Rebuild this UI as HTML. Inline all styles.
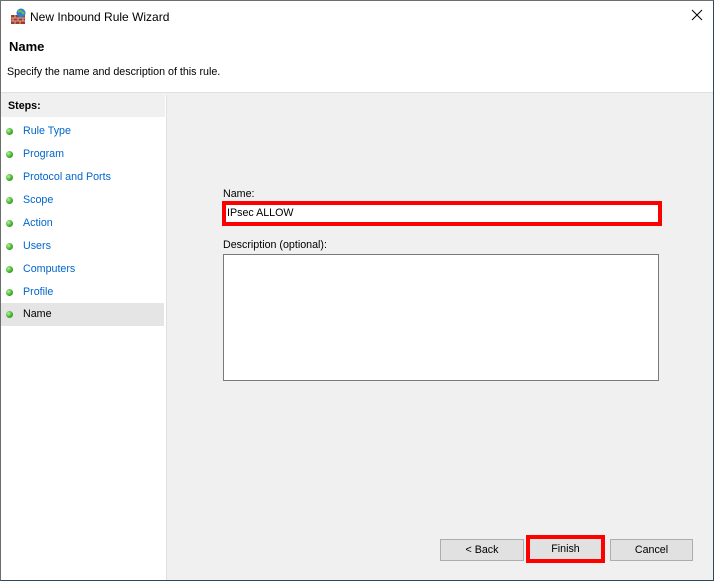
<!DOCTYPE html>
<html><head><style>
body{margin:0;width:714px;height:581px;overflow:hidden;font-family:"Liberation Sans",sans-serif;font-size:10.7px;}
.win{position:absolute;left:0;top:0;width:712px;height:579px;border:1px solid #6d6d6d;border-right-color:#2b4a5a;border-bottom-color:#2b4a5a;background:#f0f0f0;}
.a{position:absolute;}
.step{position:absolute;left:0;width:163px;height:23px;color:#0066cc;}
.step span{position:absolute;left:22px;top:5px;}
.dot{position:absolute;left:5px;top:8px;width:7px;height:7px;border-radius:50%;background:radial-gradient(circle at 35% 35%,#b8f0a0,#3aaa22 60%,#2a8a18);}
.btn{position:absolute;top:538px;height:20px;background:#e1e1e1;border:1px solid #adadad;text-align:center;line-height:20px;color:#000;}
</style></head><body>
<div class="win">
<div class="a" style="left:0;top:0;width:712px;height:91px;background:#fff;"></div>
<svg class="a" style="left:9px;top:7px" width="17" height="17" viewBox="0 0 17 17"><rect x="1" y="7" width="14" height="9" fill="#a33b2a"/><path d="M1 10h14M1 13h14M5 7v3M10 7v3M3 10v3M8 10v3M13 10v3M5 13v3M10 13v3" stroke="#e8c0b0" stroke-width="0.8"/><circle cx="11" cy="5" r="4.5" fill="#2d7fd0"/><path d="M8 4q2-2 4 0t2 2" stroke="#6cc04a" stroke-width="2" fill="none"/></svg>
<div class="a" style="left:29px;top:9px;font-size:12px;">New Inbound Rule Wizard</div>
<svg class="a" style="left:690px;top:8px" width="12" height="12"><path d="M1 1L11 11M11 1L1 11" stroke="#000" stroke-width="1"/></svg>
<div class="a" style="left:8px;top:38px;font-size:13px;font-weight:bold;">Name</div>
<div class="a" style="left:6px;top:65px;">Specify the name and description of this rule.</div>
<div class="a" style="left:0;top:91px;width:712px;height:1px;background:#e0e0e0;"></div>
<div class="a" style="left:0;top:94px;width:165px;height:485px;background:#fff;border-right:1px solid #e0e0e0;"></div>
<div class="a" style="left:0;top:94px;width:164px;height:22px;background:#f0f0f0;border-bottom:1px solid #fff;"></div>
<div class="a" style="left:7px;top:99px;font-weight:bold;">Steps:</div>
<div class="step" style="top:119px"><i class="dot"></i><span>Rule Type</span></div>
<div class="step" style="top:142px"><i class="dot"></i><span>Program</span></div>
<div class="step" style="top:165px"><i class="dot"></i><span>Protocol and Ports</span></div>
<div class="step" style="top:188px"><i class="dot"></i><span>Scope</span></div>
<div class="step" style="top:211px"><i class="dot"></i><span>Action</span></div>
<div class="step" style="top:234px"><i class="dot"></i><span>Users</span></div>
<div class="step" style="top:257px"><i class="dot"></i><span>Computers</span></div>
<div class="step" style="top:280px"><i class="dot"></i><span>Profile</span></div>
<div class="step" style="top:302px;background:#e5e5e5;color:#000"><i class="dot"></i><span>Name</span></div>
<div class="a" style="left:222px;top:187px;">Name:</div>
<div class="a" style="left:221px;top:200px;width:432px;height:17px;border:4px solid #f00;background:#fff;"></div>
<div class="a" style="left:226px;top:206px;">IPsec ALLOW</div>
<div class="a" style="left:222px;top:238px;">Description (optional):</div>
<div class="a" style="left:222px;top:253px;width:434px;height:125px;border:1px solid #7a7a7a;background:#fff;"></div>
<div class="btn" style="left:439px;width:82px;">&lt; Back</div>
<div class="a" style="left:525px;top:534px;width:71px;height:20px;border:4px solid #f00;background:#e1e1e1;text-align:center;line-height:20px;">Finish</div>
<div class="btn" style="left:609px;width:81px;">Cancel</div>
</div>
</body></html>
